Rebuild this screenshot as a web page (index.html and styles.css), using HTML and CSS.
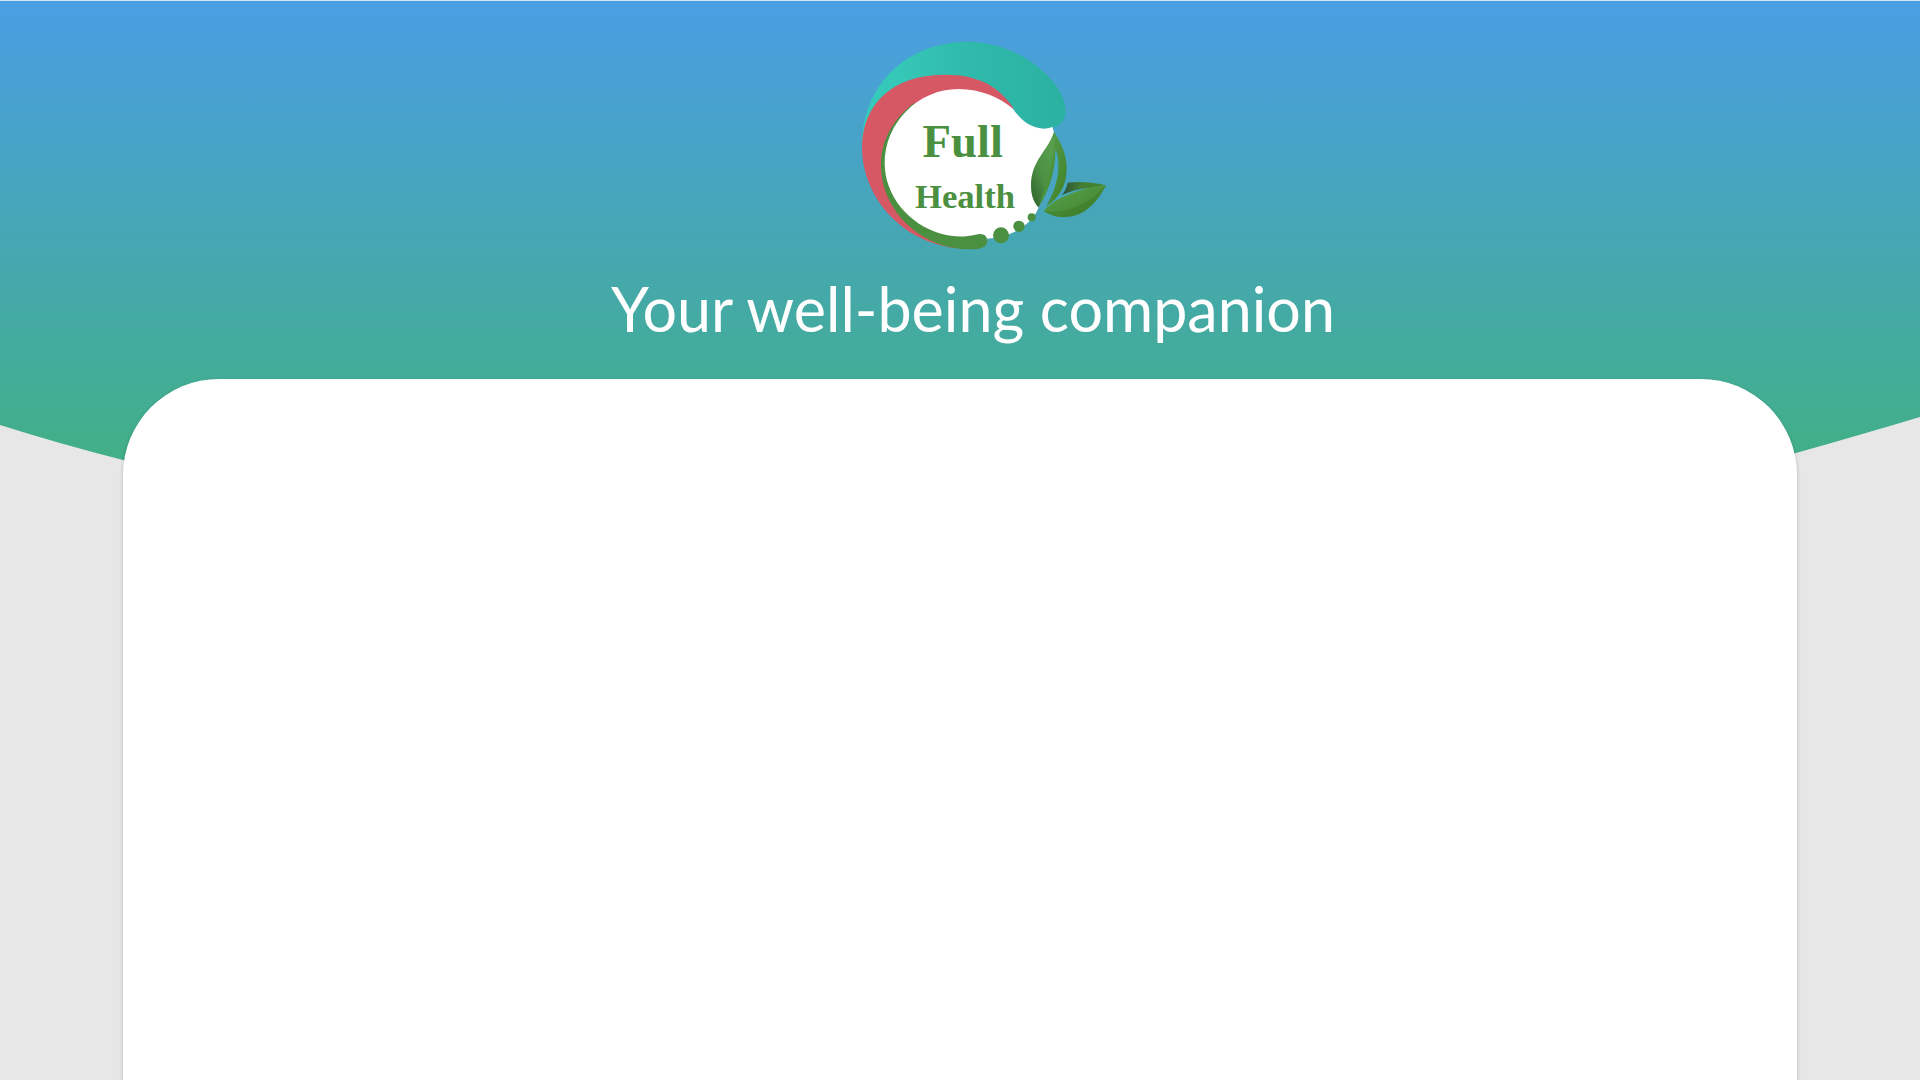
FILE: index.html
```html
<!DOCTYPE html>
<html lang="en">
<head>
  <meta charset="utf-8">
  <meta name="viewport" content="width=device-width, initial-scale=1">
  <title>Full Health</title>
  <link rel="stylesheet" href="styles.css">
</head>
<body>
  <div class="page">
    <svg class="backdrop" viewBox="0 0 1920 500" preserveAspectRatio="none" aria-hidden="true">
      <defs>
        <linearGradient id="sky" gradientUnits="userSpaceOnUse" x1="0" y1="0" x2="0" y2="500">
          <stop offset="0" stop-color="#4a9ee4"/>
          <stop offset="1" stop-color="#41b17e"/>
        </linearGradient>
      </defs>
      <path fill="url(#sky)" d="M0 0H1920V416Q1860 434 1796 452Q1400 500 960 500Q500 500 123 459Q60 443 0 424Z"/>
    </svg>
    <header class="hero">
      <svg class="logo" viewBox="-30 0 798 690" role="img" aria-label="Full Health">
        <defs>
          <linearGradient id="teal" x1="0" x2="1" y1="0" y2="0">
            <stop offset="0" stop-color="#36cbbb"/>
            <stop offset=".2" stop-color="#35c6b6"/>
            <stop offset=".55" stop-color="#2fb9aa"/>
            <stop offset="1" stop-color="#2bb1a2"/>
          </linearGradient>
          <linearGradient id="leaf" x1=".7" y1=".1" x2=".1" y2="1">
            <stop offset="0" stop-color="#579f4d"/>
            <stop offset=".5" stop-color="#4c9044"/>
            <stop offset="1" stop-color="#2f652c"/>
          </linearGradient>
          <linearGradient id="leaf-light" x1="0" y1="0" x2="1" y2="1">
            <stop offset="0" stop-color="#5ba553"/>
            <stop offset="1" stop-color="#3e7f25"/>
          </linearGradient>
          <linearGradient id="leaf-dark" x1="0" y1="0" x2="1" y2="0">
            <stop offset="0" stop-color="#2c4f37"/>
            <stop offset=".4" stop-color="#427c34"/>
            <stop offset="1" stop-color="#448a2d"/>
          </linearGradient>
        </defs>
        <path fill="url(#teal)" d="M36 345C38 160 174 35 355 35C510 35 647 158 647 243C647 278 623 296 584 296C540 296 514 270 490 238L280 160L60 260Z"/>
        <path fill="#d75865" d="M36 352C37 220 130 135 280 134C390 133 448 172 492 236L330 200L130 400L360 657C170 657 36 510 36 352Z"/>
        <path fill="#4b8f40" d="M195 217C126 270 93 333 93 405C93 540 210 658 362 658C394 658 412 650 412 632C412 617 400 610 380 613L240 550L150 300Z"/>
        <path fill="#fff" d="M104 400C104 278 205 177 325 177C395 177 450 204 489 236C512 270 540 295 584 296Q598 295 607 291L612 307L600 420L566 532C551 575 496 622 411 626C407 613 395 610 376 614C347 621 311 622 276 612C174 584 104 495 104 400Z"/>
        <path fill="url(#leaf)" d="M612 305C593 365 543 390 543 467C543 500 554 521 566 532C595 492 626 425 612 305Z"/>
        <path fill="url(#leaf-light)" d="M612 305C618 390 585 465 566 532C594 494 614 450 617 360C640 425 610 485 588 529C633 500 650 463 650 410C650 370 628 331 612 305Z"/>
        <path fill="#49a4c2" d="M617 359C616 433 592 488 566 532L588 529C617 481 634 429 617 359Z"/>
        <path fill="url(#leaf-dark)" d="M653 458C690 453 734 457 768 466L721 474C690 475 660 484 636 495Q649 479 653 458Z"/>
        <path fill="url(#leaf-light)" d="M768 466C728 468 623 492 581 543C608 560 627 562 650 561C705 558 741 517 768 466Z"/>
        <path fill="#397225" opacity=".35" d="M768 466C711 527 655 551 581 543C608 560 627 562 650 561C705 558 741 517 768 466Z"/>
        <g fill="#4b8f40">
          <circle cx="453" cy="616" r="24"/>
          <circle cx="507" cy="589" r="17"/>
          <circle cx="545" cy="562" r="12"/>
          <text class="logo-word logo-word-top" x="338" y="382" text-anchor="middle">Full</text>
          <text class="logo-word logo-word-bottom" x="345" y="534" text-anchor="middle">Health</text>
        </g>
      </svg>
      <h1 class="tagline">Your well-being companion</h1>
    </header>
    <main class="card"></main>
  </div>
</body>
</html>
```
FILE: styles.css
```css
* {
  box-sizing: border-box;
}

body {
  margin: 0;
  background: #e7e7e7;
  font-family: Lato, "Open Sans", sans-serif;
}

.page {
  position: relative;
  display: flex;
  flex-direction: column;
  min-height: 100vh;
  overflow: hidden;
  border-top: 1px solid #d5e5f2;
}

.backdrop {
  position: absolute;
  top: 0;
  left: 0;
  z-index: -1;
  width: 100%;
  height: 500px;
}

.hero {
  display: flex;
  flex-direction: column;
  align-items: center;
  padding: 29px 0 34px 26px;
}

.logo {
  width: 266px;
  height: 230px;
}

.logo-word {
  font-family: "Liberation Serif", serif;
  font-weight: 700;
}

.logo-word-top {
  font-size: 140px;
}

.logo-word-bottom {
  font-size: 104px;
}

.tagline {
  margin: 13px 0 0;
  color: #fff;
  font-size: 61px;
  font-weight: 400;
  line-height: 72px;
  text-align: center;
}

.card {
  flex: 1;
  margin: 0 6.4%;
  border-radius: 96px 96px 0 0;
  background: #fff;
  box-shadow: 0 2px 4px rgba(0, 0, 0, 0.2);
}
```
